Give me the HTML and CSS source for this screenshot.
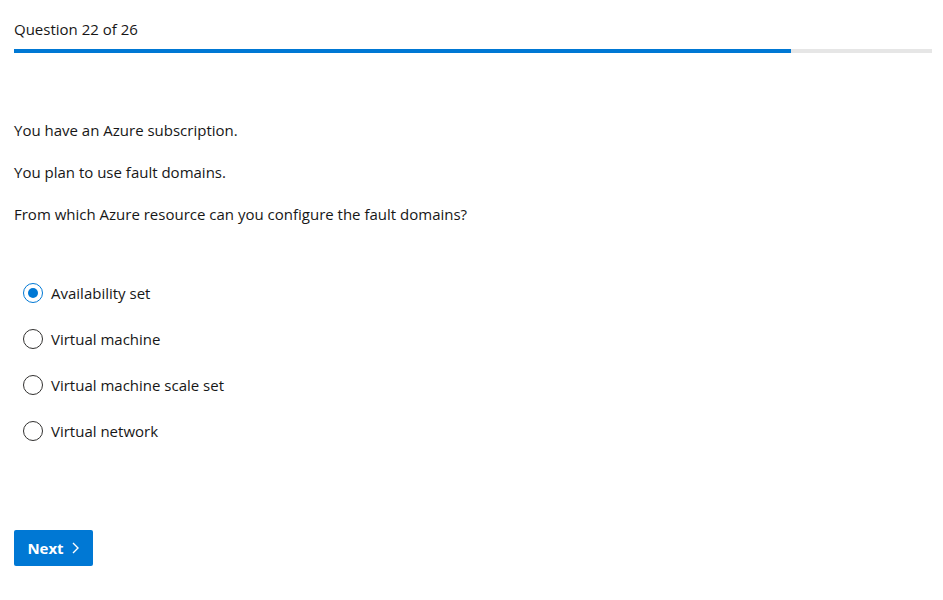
FILE: index.html
```html
<!DOCTYPE html>
<html>
<head>
<meta charset="utf-8">
<link rel="stylesheet" href="styles.css">
</head>
<body>
<div class="page">
  <div class="header">Question 22 of 26</div>
  <div class="progress"><div class="bar" style="width: 84.6%"></div></div>
  <div class="question">
    <p>You have an Azure subscription.</p>
    <p>You plan to use fault domains.</p>
    <p>From which Azure resource can you configure the fault domains?</p>
  </div>
  <div class="options">
    <label class="option"><span class="radio checked"></span><span>Availability set</span></label>
    <label class="option"><span class="radio"></span><span>Virtual machine</span></label>
    <label class="option"><span class="radio"></span><span>Virtual machine scale set</span></label>
    <label class="option"><span class="radio"></span><span>Virtual network</span></label>
  </div>
  <button class="next">Next <svg width="10" height="14" viewBox="0 0 10 14"><path d="M3 2 L8 7 L3 12" fill="none" stroke="#fff" stroke-width="1.4"/></svg></button>
</div>
</body>
</html>
```
FILE: styles.css
```css
html, body { margin: 0; padding: 0; background: #fff; }
body { font-family: "Open Sans", "Noto Sans", sans-serif; font-size: 15px; color: #171717; }
.page { padding: 0 11px 0 14px; }
.header { padding-top: 19px; line-height: 20px; height: 30px; }
.progress { height: 4px; background: #e6e6e6; }
.bar { height: 100%; background: #0078d4; }
.question { padding-top: 67px; }
.question p { margin: 0 0 22px 0; line-height: 20px; }
.options { padding-top: 37px; display: flex; flex-direction: column; gap: 26px; padding-left: 9px; }
.option { display: flex; align-items: center; gap: 8px; height: 20px; cursor: pointer; }
.radio { width: 18px; height: 18px; border: 1px solid #323130; border-radius: 50%; box-sizing: content-box; display: flex; align-items: center; justify-content: center; }
.radio.checked { border-color: #0078d4; }
.radio.checked::after { content: ""; width: 10px; height: 10px; border-radius: 50%; background: #0078d4; }
.next { margin-top: 89px; width: 79px; height: 36px; background: #0078d4; border: none; border-radius: 2px; color: #fff; font-family: "Open Sans", sans-serif; font-weight: 700; font-size: 15px; display: flex; align-items: center; justify-content: center; gap: 6px; padding: 0; }
```
